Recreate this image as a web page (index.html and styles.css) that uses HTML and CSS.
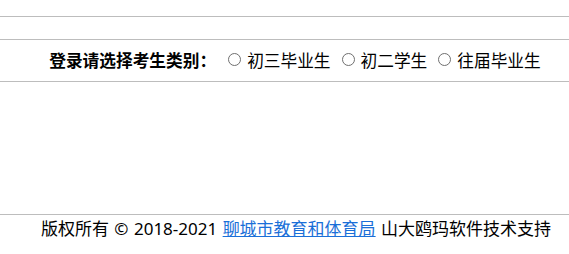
FILE: index.html
```html
<!DOCTYPE html>
<html lang="zh-CN">
<head>
<meta charset="utf-8">
<title>登录</title>
<link rel="stylesheet" href="styles.css">
</head>
<body>
<div class="top"></div>
<div class="nav"></div>
<div class="row">
  <span class="label">登录请选择考生类别：</span>
  <label class="opt"><input type="radio" name="kind">初三毕业生</label>
  <label class="opt"><input type="radio" name="kind">初二学生</label>
  <label class="opt"><input type="radio" name="kind">往届毕业生</label>
</div>
<div class="main"></div>
<div class="footer">版权所有 © 2018-2021 <a href="#">聊城市教育和体育局</a> 山大鸥玛软件技术支持</div>
</body>
</html>
```
FILE: styles.css
```css
html, body {
  margin: 0;
  padding: 0;
  background: #fff;
}
body {
  font-family: "Noto Sans CJK SC", "Noto Sans", sans-serif;
  font-size: 16.7px;
  color: #000;
}
.top {
  height: 16px;
  border-bottom: 1px solid #bdbdbd;
}
.nav {
  height: 22px;
  border-bottom: 1px solid #bdbdbd;
}
.row {
  height: 41px;
  border-bottom: 1px solid #bdbdbd;
  display: flex;
  align-items: center;
  justify-content: center;
  padding-left: 27px;
  line-height: 1;
}
.label {
  font-weight: bold;
  margin-right: 7px;
}
.opt {
  display: flex;
  align-items: center;
  margin-right: 6px;
}
.opt input {
  appearance: none;
  -webkit-appearance: none;
  flex: none;
  box-sizing: border-box;
  width: 13px;
  height: 13px;
  border: 1px solid #6f6f6f;
  border-radius: 50%;
  background: #fff;
  margin: -2px 6px 0 5px;
}
.main {
  height: 132px;
}
.footer {
  border-top: 1px solid #bdbdbd;
  padding-top: 2px;
  padding-left: 23px;
  text-align: center;
  line-height: 24px;
  font-size: 17px;
  word-spacing: 1px;
  font-family: "Noto Sans", "Noto Sans CJK SC", sans-serif;
}
.footer a {
  color: #1a6fd8;
  text-decoration: underline;
}
```
